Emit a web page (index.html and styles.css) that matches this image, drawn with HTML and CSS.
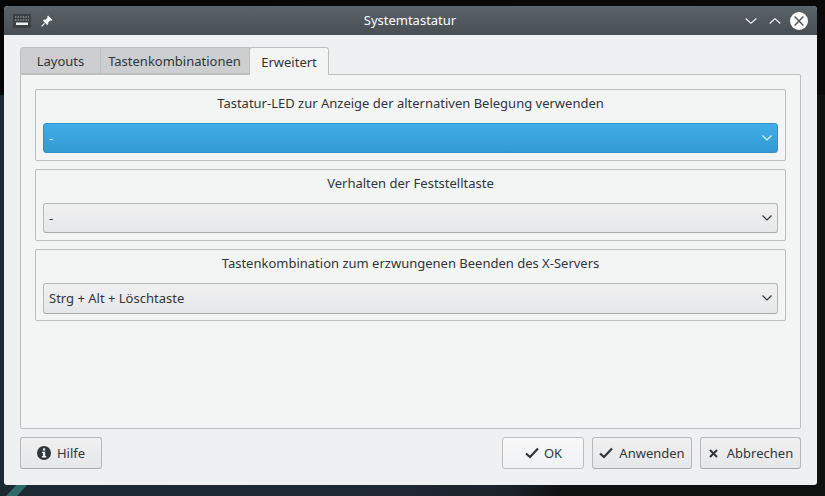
FILE: index.html
```html
<!DOCTYPE html>
<html lang="de">
<head>
<meta charset="utf-8">
<title>Systemtastatur</title>
<link rel="stylesheet" href="styles.css">
</head>
<body>
<div class="desktop">
  <svg class="wall-stripe" width="40" height="12" viewBox="0 0 40 12"><path d="M6 12 L17 0 L28 0 L17 12 Z" fill="#2f6a68"/></svg>
  <main class="window">
    <header class="titlebar">
      <div class="tb-left">
        <svg class="ic-kbd" width="18" height="14" viewBox="0 0 18 14">
          <rect x="0" y="0" width="18" height="14" rx="1" fill="#3a4145"/>
          <path d="M2 3h14M2 6h14" stroke="#aeb3b6" stroke-width="1.2" stroke-dasharray="1.4 1.2"/>
          <rect x="3" y="8.5" width="12" height="2.5" fill="#f0f1f2"/>
        </svg>
        <svg class="ic-pin" width="12" height="12" viewBox="0 0 12 12">
          <path d="M7 .5 L11.5 5 L10.3 5.8 L9.3 5.4 L7.2 7.6 L7.2 9.2 L6.2 10 L2 5.8 L2.8 4.8 L4.4 4.8 L6.6 2.7 L6.2 1.7 Z" fill="#fff"/>
          <path d="M3.6 8.4 L.6 11.4" stroke="#fff" stroke-width="1.2"/>
        </svg>
      </div>
      <div class="tb-title">Systemtastatur</div>
      <div class="tb-right">
        <svg class="tb-chev" width="12" height="6" viewBox="0 0 12 6"><path d="M.7 .5 L6 5.3 L11.3 .5" fill="none" stroke="#fcfcfc" stroke-width="1.1"/></svg>
        <svg class="tb-chev" width="12" height="6" viewBox="0 0 12 6"><path d="M.7 5.5 L6 .7 L11.3 5.5" fill="none" stroke="#fcfcfc" stroke-width="1.1"/></svg>
        <svg class="tb-close" width="18" height="18" viewBox="0 0 18 18"><circle cx="9" cy="9" r="9" fill="#fcfcfc"/><path d="M4.6 4.6 L13.4 13.4 M13.4 4.6 L4.6 13.4" stroke="#4d5559" stroke-width="1.4"/></svg>
      </div>
    </header>
    <div class="content">
      <div class="tabs">
        <div class="tab tab-layouts">Layouts</div>
        <div class="tab tab-keys">Tastenkombinationen</div>
        <div class="tab tab-active">Erweitert</div>
      </div>
      <section class="panel">
        <div class="group">
          <div class="group-title">Tastatur-LED zur Anzeige der alternativen Belegung verwenden</div>
          <div class="combo combo-focus"><span>-</span>
            <svg width="10" height="6" viewBox="0 0 10 6"><path d="M.5 .5 L5 5 L9.5 .5" fill="none" stroke="#eaf5fc" stroke-width="1.2"/></svg>
          </div>
        </div>
        <div class="group">
          <div class="group-title">Verhalten der Feststelltaste</div>
          <div class="combo"><span>-</span>
            <svg width="10" height="6" viewBox="0 0 10 6"><path d="M.5 .5 L5 5 L9.5 .5" fill="none" stroke="#31363b" stroke-width="1.2"/></svg>
          </div>
        </div>
        <div class="group">
          <div class="group-title">Tastenkombination zum erzwungenen Beenden des X-Servers</div>
          <div class="combo combo-tall"><span>Strg + Alt + Löschtaste</span>
            <svg width="10" height="6" viewBox="0 0 10 6"><path d="M.5 .5 L5 5 L9.5 .5" fill="none" stroke="#31363b" stroke-width="1.2"/></svg>
          </div>
        </div>
      </section>
      <footer class="buttons">
        <button class="btn btn-help">
          <svg width="14" height="14" viewBox="0 0 14 14"><circle cx="7" cy="7" r="7" fill="#31363b"/><rect x="5.9" y="2.4" width="2.3" height="2.2" fill="#f0f1f2"/><path d="M4.9 5.7h3.3v4.4h1v1.4H4.9v-1.4h1V7.1h-1z" fill="#f0f1f2"/></svg>
          Hilfe
        </button>
        <div class="spacer"></div>
        <button class="btn btn-ok">
          <svg width="14" height="12" viewBox="0 0 14 12"><path d="M1 6.5 L5 10 L13 1.5" fill="none" stroke="#31363b" stroke-width="2.2"/></svg>
          OK
        </button>
        <button class="btn btn-apply">
          <svg width="14" height="12" viewBox="0 0 14 12"><path d="M1 6.5 L5 10 L13 1.5" fill="none" stroke="#31363b" stroke-width="2.2"/></svg>
          Anwenden
        </button>
        <button class="btn btn-cancel">
          <svg width="9" height="9" viewBox="0 0 9 9"><path d="M1 1 L8 8 M8 1 L1 8" fill="none" stroke="#31363b" stroke-width="2"/></svg>
          Abbrechen
        </button>
      </footer>
    </div>
  </main>
</div>
</body>
</html>
```

FILE: styles.css
```css
* { box-sizing: border-box; }
html, body { margin: 0; height: 100%; }
body {
  font-family: "Noto Sans", sans-serif;
  font-size: 13px;
  color: #31363b;
  overflow: hidden;
}
.desktop {
  position: relative;
  width: 825px;
  height: 496px;
  padding: 6px 8px 11px 4px;
  background:
    linear-gradient(90deg, #060606 0%, #0a0a0a 100%) 0 0 / 100% 95px no-repeat,
    linear-gradient(90deg, #1b2a33 0%, #1e2732 50%, #1a2229 62%, #101212 68%, #0f1010 100%);
}
.wall-stripe { position: absolute; left: 0; bottom: 0; }
.window {
  position: relative;
  display: flex;
  flex-direction: column;
  width: 813px;
  height: 479px;
  background: #eff0f1;
  border-radius: 4px 4px 3px 3px;
  overflow: hidden;
}
.titlebar {
  display: flex;
  align-items: center;
  height: 29px;
  flex: none;
  background: linear-gradient(180deg, #5a6369 0%, #474f54 100%);
  color: #fcfcfc;
  position: relative;
}
.tb-left {
  display: flex;
  align-items: center;
  gap: 10px;
  padding-left: 9px;
  width: 120px;
}
.tb-title {
  flex: 1;
  text-align: center;
  font-size: 13px;
  padding: 0 1px 1px 0;
}
.tb-right {
  display: flex;
  align-items: center;
  gap: 12px;
  width: 120px;
  justify-content: flex-end;
  padding-right: 9px;
}
.tb-close { margin-left: -3px; }
.content {
  flex: 1;
  display: flex;
  flex-direction: column;
  padding: 12px 16px 16px;
}
.tabs {
  display: flex;
  height: 28px;
  position: relative;
  z-index: 1;
  flex: none;
}
.tab {
  display: flex;
  align-items: center;
  justify-content: center;
  height: 27px;
  background: #cdcecf;
  border: 1px solid #bcbebf;
  margin-right: -1px;
}
.tab-layouts { width: 81px; border-radius: 3px 0 0 0; }
.tab-keys { width: 150px; padding-right: 1px; }
.tab-active {
  width: 80px;
  height: 28px;
  background: #f3f4f4;
  border-bottom: none;
  border-radius: 3px 3px 0 0;
  margin-right: 0;
}
.panel {
  height: 355px;
  margin-top: -1px;
  background: #f3f4f4;
  border: 1px solid #bcbebf;
  border-radius: 0 2px 2px 2px;
  padding: 14px 14px 0;
  display: flex;
  flex-direction: column;
  gap: 8px;
  flex: none;
}
.group {
  height: 72px;
  flex: none;
  border: 1px solid #bcbebf;
  border-radius: 2px;
  padding: 0 7px;
}
.group-title {
  height: 33px;
  line-height: 26px;
  text-align: center;
}
.combo {
  display: flex;
  align-items: center;
  justify-content: space-between;
  height: 30px;
  padding: 0 5px 1px 5px;
  border: 1px solid #b6b8b9;
  border-bottom-color: #a9abad;
  border-radius: 3px;
  background: linear-gradient(180deg, #f0f0f1 0%, #e6e7e8 100%);
}
.combo-focus {
  background: linear-gradient(180deg, #3daee9 0%, #349ad2 100%);
  border-color: #2f92c8;
  color: #fcfcfc;
}
.combo-tall { height: 31px; padding-bottom: 2px; }
.buttons {
  display: flex;
  gap: 8px;
  margin-top: 8px;
  height: 32px;
  flex: none;
}
.spacer { flex: 1; }
.btn {
  display: flex;
  align-items: center;
  justify-content: center;
  gap: 6px;
  height: 32px;
  padding: 0;
  font: inherit;
  color: inherit;
  border: 1px solid #b6b8b9;
  border-bottom-color: #a9abad;
  border-radius: 3px;
  background: linear-gradient(180deg, #f0f0f1 0%, #e6e7e8 100%);
}
.btn-help { width: 82px; }
.btn-ok {
  width: 82px;
  gap: 5px;
  padding-left: 1px;
  background: linear-gradient(180deg, #f8f8f9 0%, #f0f1f2 100%);
  border-color: #bcbebf;
}
.btn-apply { width: 100px; }
.btn-cancel { width: 101px; gap: 9px; padding-left: 1px; }
```
